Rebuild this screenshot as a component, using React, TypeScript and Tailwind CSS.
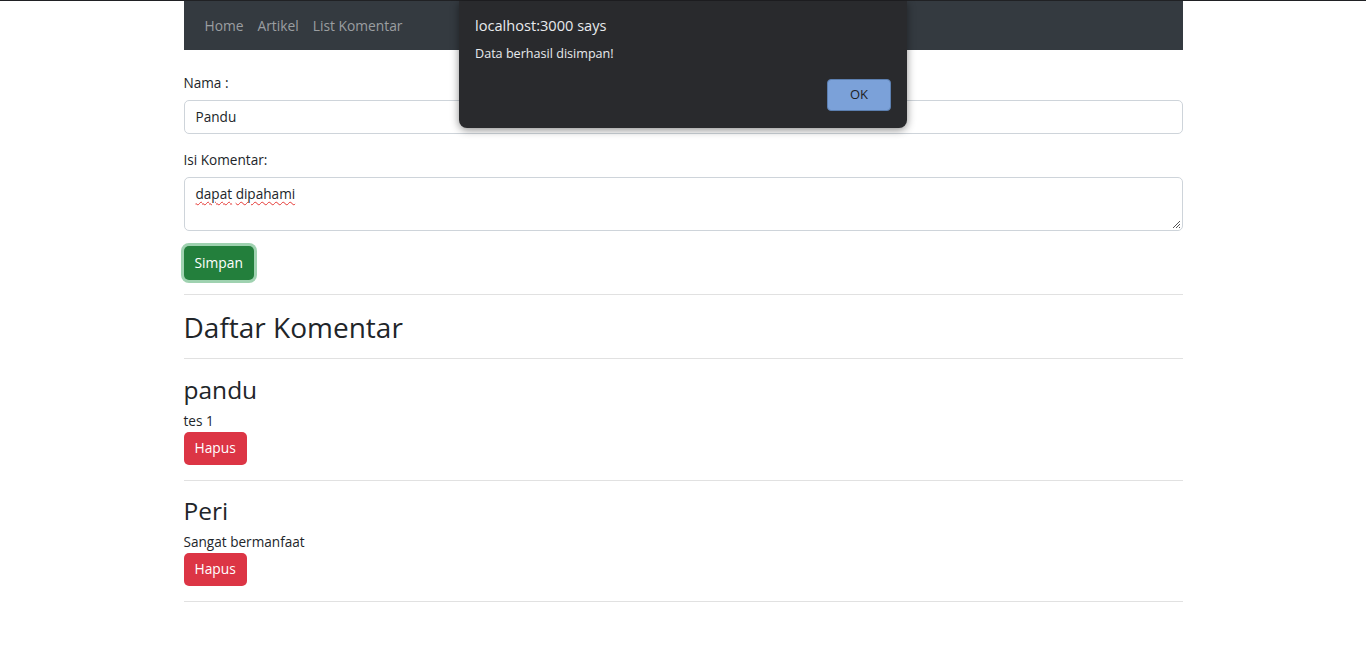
import React from "react";

const font = { fontFamily: '"Open Sans", "Noto Sans", sans-serif' };

function Comment({ name, text, first }: { name: string; text: string; first?: boolean }) {
  return (
    <div>
      <h3 className={`text-[24.5px] leading-[30px] font-medium text-[#212529] ${first ? "mt-[16px]" : "mt-[15px]"}`}>{name}</h3>
      <p className="text-[13.6px] leading-[22px] text-[#212529] mt-[5px]">{text}</p>
      <button className="h-[33px] px-[11px] rounded-[5px] bg-[#dc3545] text-white text-[13.8px]">Hapus</button>
      <hr className="border-0 border-t border-[#e1e1e1] mt-[15px]" />
    </div>
  );
}

export default function App() {
  return (
    <div className="relative min-h-[668px] bg-white border-t border-[#202124]" style={font}>
      <div className="w-[999px] mx-auto">
        <nav className="h-[49px] bg-[#343a40] flex items-center px-[14px] pt-[2px]">
          {["Home", "Artikel", "List Komentar"].map((t) => (
            <a key={t} className="px-[7px] text-[13.8px] text-[#9b9ea1]">{t}</a>
          ))}
        </nav>
        <div className="mt-[22px]">
          <label className="block text-[13.6px] leading-[22px] text-[#212529]">Nama :</label>
          <div className="mt-[6px] h-[34px] border border-[#ced4da] rounded-[5px] px-[11px] flex items-center text-[13.6px] text-[#212529]">Pandu</div>
          <label className="block mt-[15px] text-[13.6px] leading-[22px] text-[#212529]">Isi Komentar:</label>
          <div className="relative mt-[6px] h-[54px] border border-[#ced4da] rounded-[5px] px-[11px] pt-[5px] text-[13.6px] leading-[22px] text-[#212529]">
            <span className="underline decoration-wavy decoration-[#e53935] decoration-1 underline-offset-[2px]">dapat</span>{" "}
            <span className="underline decoration-wavy decoration-[#e53935] decoration-1 underline-offset-[2px]">dipahami</span>
            <svg className="absolute right-[1px] bottom-[1px]" width="9" height="9" viewBox="0 0 9 9">
              <path d="M8 1 L1 8 M8 4 L4 8 M8 7 L7 8" stroke="#555" strokeWidth="1" />
            </svg>
          </div>
          <button className="mt-[15px] h-[34px] px-[11px] rounded-[5px] bg-[#237f3c] text-white text-[13.8px] ring-[3px] ring-[#9fd2b0]">Simpan</button>
          <hr className="border-0 border-t border-[#e1e1e1] mt-[14px]" />
        </div>
        <h2 className="text-[28px] leading-[35px] font-medium text-[#212529] mt-[15px]">Daftar Komentar</h2>
        <hr className="border-0 border-t border-[#e1e1e1] mt-[13px]" />
        <Comment name="pandu" text="tes 1" first />
        <Comment name="Peri" text="Sangat bermanfaat" />
      </div>

      <div className="absolute left-[459px] top-0 w-[448px] h-[127px] bg-[#292a2d] rounded-b-[8px] shadow-[0_2px_8px_rgba(0,0,0,0.45)] px-[16px] pt-[13px]">
        <div className="text-[14.6px] text-[#e8eaed] leading-[22px]">localhost:3000 says</div>
        <div className="text-[12.6px] text-[#e8eaed] mt-[9px] leading-[18px]">Data berhasil disimpan!</div>
        <div className="flex justify-end mt-[16px]">
          <button className="w-[64px] h-[32px] rounded-[4px] bg-[#7ba1d9] text-[#202124] text-[13px] border border-[#5c7fb0]">OK</button>
        </div>
      </div>
    </div>
  );
}
